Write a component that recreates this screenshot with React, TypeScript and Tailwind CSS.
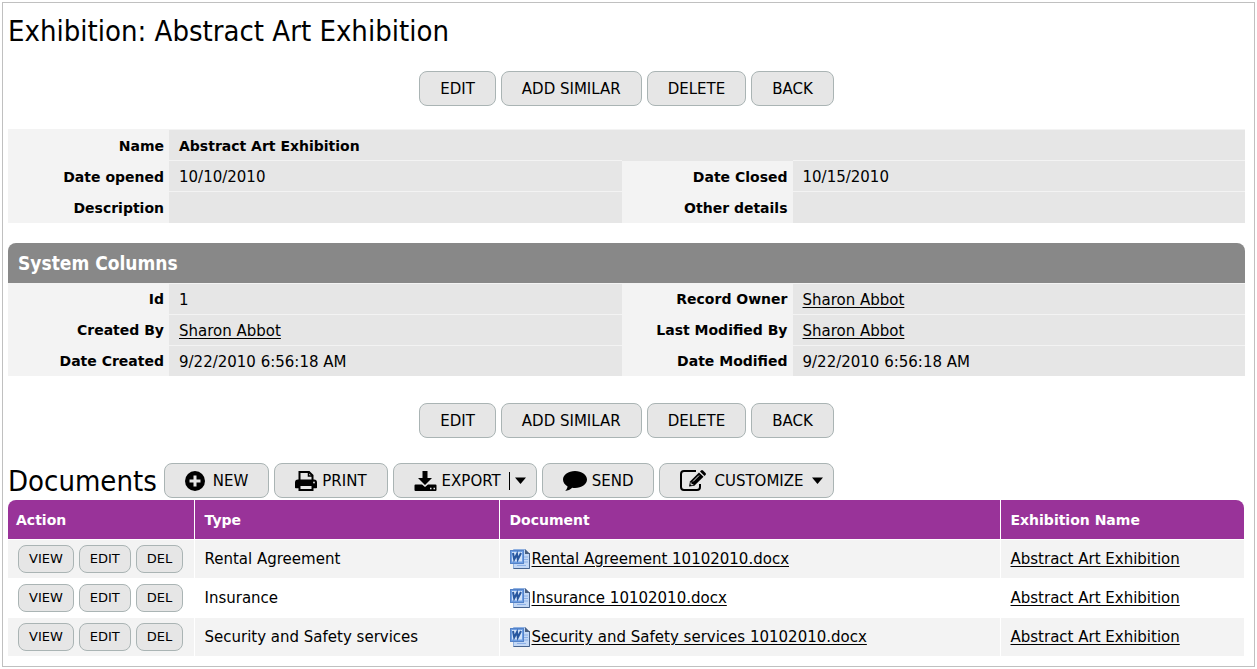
import type React from "react"
import clsx from "clsx"

interface Field {
  label: string
  value?: string
  link?: boolean
  bold?: boolean
}

interface DocumentRow {
  type: string
  file: string
  exhibition: string
}

const detailRows: Field[][] = [
  [{ label: "Name", value: "Abstract Art Exhibition", bold: true }],
  [
    { label: "Date opened", value: "10/10/2010" },
    { label: "Date Closed", value: "10/15/2010" },
  ],
  [{ label: "Description" }, { label: "Other details" }],
]

const systemRows: Field[][] = [
  [
    { label: "Id", value: "1" },
    { label: "Record Owner", value: "Sharon Abbot", link: true },
  ],
  [
    { label: "Created By", value: "Sharon Abbot", link: true },
    { label: "Last Modified By", value: "Sharon Abbot", link: true },
  ],
  [
    { label: "Date Created", value: "9/22/2010 6:56:18 AM" },
    { label: "Date Modified", value: "9/22/2010 6:56:18 AM" },
  ],
]

const documents: DocumentRow[] = [
  { type: "Rental Agreement", file: "Rental Agreement 10102010.docx", exhibition: "Abstract Art Exhibition" },
  { type: "Insurance", file: "Insurance 10102010.docx", exhibition: "Abstract Art Exhibition" },
  {
    type: "Security and Safety services",
    file: "Security and Safety services 10102010.docx",
    exhibition: "Abstract Art Exhibition",
  },
]

const condensed = "font-['DejaVu_Sans_Condensed','DejaVu_Sans',sans-serif]"

const PlusIcon = () => (
  <svg className="h-5 w-5" viewBox="0 0 20 20" aria-hidden="true">
    <circle cx="10" cy="10" r="10" />
    <path d="M10 4.5v11M4.5 10h11" stroke="#e6e6e6" strokeWidth="3" />
  </svg>
)

const PrintIcon = () => (
  <svg className="h-5 w-[22px]" viewBox="0 0 22 20" aria-hidden="true">
    <path d="M4.5 9V1H14l3.500 3.500V9" fill="#e6e6e6" stroke="black" strokeWidth="2" />
    <path d="M13.500 1v4H18" fill="none" stroke="black" strokeWidth="1.500" />
    <path d="M3 8.500h16a3 3 0 0 1 3 3v5a.8.8 0 0 1-.8.8H.8a.8.8 0 0 1-.8-.8v-5a3 3 0 0 1 3-3z" />
    <path d="M4.500 14h13v5h-13z" fill="#e6e6e6" stroke="black" strokeWidth="2" />
    <circle cx="19" cy="11.500" r=".9" fill="#e6e6e6" />
  </svg>
)

const ExportIcon = () => (
  <svg className="h-5 w-[23px]" viewBox="0 0 23 20" aria-hidden="true">
    <path d="M8.500 0h5v7h4.500L11 14 4 7h4.500z" />
    <path d="M1.500 13.500H8l3 2.500 3-2.500h7.500a1 1 0 0 1 1 1V19a1 1 0 0 1-1 1h-20a1 1 0 0 1-1-1v-4.500a1 1 0 0 1 1-1z" />
    <path d="M16 17.500h1.500M19.500 17.500H21" stroke="#e6e6e6" strokeWidth="1.500" />
  </svg>
)

const SendIcon = () => (
  <svg className="h-5 w-6" viewBox="0 0 24 20" aria-hidden="true">
    <path d="M12 0c6.600 0 12 3.800 12 8.500S18.600 17 12 17c-1 0-1.900-.1-2.800-.2C7.300 18.500 5 19.700 2 20c1.300-1.200 2.300-2.800 2.600-4.600C1.800 13.800 0 11.300 0 8.500 0 3.800 5.400 0 12 0z" />
  </svg>
)

const CustomizeIcon = () => (
  <svg className="h-[21px] w-[26px]" viewBox="0 0 26 21" aria-hidden="true">
    <path
      d="M16 1H4a3 3 0 0 0-3 3v13a3 3 0 0 0 3 3h13a3 3 0 0 0 3-3v-3"
      fill="none"
      stroke="black"
      strokeWidth="2"
    />
    <path d="M9 16.500l1-5L19 2.500l4.500 4.200-9.200 9z" />
    <path d="M20 1.500l1-1a1.500 1.500 0 0 1 2 0l2.500 2.500a1.500 1.500 0 0 1 0 2l-1 1z" />
    <path d="M13 11.500l6-6M11 12.500v2.200h2.300" fill="none" stroke="#e6e6e6" strokeWidth="1" />
  </svg>
)

const Caret = () => (
  <svg className="h-[7px] w-[11px]" viewBox="0 0 11 7" aria-hidden="true">
    <path d="M0 .5h11L5.500 7z" />
  </svg>
)

const WordIcon = () => (
  <svg className="h-5 w-5 shrink-0" viewBox="0 0 20 20" aria-hidden="true">
    <path d="M3.500.5H15L19.500 5v14.500h-16z" fill="#c3d8f5" stroke="#8fb0e0" />
    <path d="M19.500 4v15.500H3.500" fill="none" stroke="#47648f" />
    <path d="M15 0v5h5z" fill="#4a5f80" />
    <path d="M14 8h4M14 10.500h4M14 13h4M7 16.500h9" stroke="#8db0e6" />
    <rect x=".5" y="1.500" width="13" height="13" fill="#6f9fe4" stroke="#5583c8" />
    <rect x="2" y="3" width="10" height="9.500" fill="#d3e3f9" />
    <path d="M3 4l1.200 6.500L7 5l.8 5.500L11 4" fill="none" stroke="#28579f" strokeWidth="2" />
  </svg>
)

const Button: React.FC<{ className?: string; children: React.ReactNode }> = ({ className, children }) => (
  <button
    type="button"
    className={clsx(
      "flex h-[35px] items-center rounded-lg border border-[#aab4b4] bg-[#e6e6e6] text-[15px]",
      className ?? "px-5 pt-px",
    )}
  >
    {children}
  </button>
)

const RecordActions = () => (
  <div className="flex flex-wrap justify-center gap-[5px]">
    <Button>EDIT</Button>
    <Button>ADD SIMILAR</Button>
    <Button>DELETE</Button>
    <Button>BACK</Button>
  </div>
)

const FieldTable: React.FC<{ rows: Field[][] }> = ({ rows }) => (
  <table className="w-full table-fixed border-collapse bg-[#f3f3f3]">
    <colgroup>
      <col className="w-[161px]" />
      <col />
      <col className="w-[171px]" />
      <col />
    </colgroup>
    <tbody>
      {rows.map((fields) => (
        <tr key={fields[0].label} className="h-[31px]">
          {fields.map((field) => (
            <FieldCells key={field.label} field={field} span={fields.length === 1 ? 3 : 1} />
          ))}
        </tr>
      ))}
    </tbody>
  </table>
)

const FieldCells: React.FC<{ field: Field; span: number }> = ({ field, span }) => (
  <>
    <th scope="row" className="pr-[5px] pt-px text-right text-[14px] font-bold">
      {field.label}
    </th>
    <td
      colSpan={span}
      className={clsx(
        "border-t border-[#f3f3f3] bg-[#e6e6e6] bg-clip-padding pl-[10px] pt-[2px]",
        field.bold && "text-[14px] font-bold",
      )}
    >
      {field.link ? (
        <a href="#owner" className="underline underline-offset-2">
          {field.value}
        </a>
      ) : (
        field.value
      )}
    </td>
  </>
)

const SmallButton: React.FC<{ children: React.ReactNode }> = ({ children }) => (
  <button type="button" className="h-7 rounded-lg border border-[#aab4b4] bg-[#e6e6e6] px-[10px] text-[13px] leading-none">
    {children}
  </button>
)

export default function App() {
  return (
    <main className="m-[2px] border border-[#c0c0c0] bg-white pb-[10px] pl-[5px] pr-[9px] font-['DejaVu_Sans',sans-serif] text-[15px] leading-5 text-black">
      <h1 className={clsx("pt-[10px] text-[29px] leading-9", condensed)}>Exhibition: Abstract Art Exhibition</h1>

      <div className="mt-[22px]">
        <RecordActions />
      </div>

      <section className="mt-[23px]">
        <FieldTable rows={detailRows} />
      </section>

      <section className="mt-5">
        <h2 className={clsx("rounded-t-lg bg-[#888888] px-[10px] text-[19px] font-bold leading-10 text-white", condensed)}>
          System Columns
        </h2>
        <FieldTable rows={systemRows} />
      </section>

      <div className="mt-[27px]">
        <RecordActions />
      </div>

      <section className="mt-[25px]">
        <div className="flex flex-wrap items-center gap-[5px]">
          <h2 className={clsx("mr-[2px] pt-[2px] text-[29px] leading-[33px]", condensed)}>Documents</h2>
          <Button className="gap-2 px-5">
            <PlusIcon />
            NEW
          </Button>
          <Button className="gap-[5px] px-5">
            <PrintIcon />
            PRINT
          </Button>
          <Button className="gap-[5px] pl-5 pr-[10px]">
            <ExportIcon />
            EXPORT
            <span className="ml-[3px] h-[18px] border-l border-black" />
            <Caret />
          </Button>
          <Button className="gap-[5px] px-5">
            <SendIcon />
            SEND
          </Button>
          <Button className="gap-2 pl-5 pr-[10px]">
            <CustomizeIcon />
            CUSTOMIZE
            <Caret />
          </Button>
        </div>

        <div className="mr-px mt-[2px] overflow-hidden rounded-t-lg">
          <table className="w-full border-collapse">
            <thead>
              <tr className="h-[39px] bg-[#993399] text-left text-[14px] text-white">
                <th className="w-[186px] border-r border-white pl-2 pt-[2px]">Action</th>
                <th className="w-[305px] border-r border-white pl-[10px] pt-[2px]">Type</th>
                <th className="w-[501px] border-r border-white pl-[10px] pt-[2px]">Document</th>
                <th className="pl-[10px] pt-[2px]">Exhibition Name</th>
              </tr>
            </thead>
            <tbody>
              {documents.map((doc) => (
                <tr key={doc.file} className="h-[39px] border-t border-white odd:bg-[#f3f3f3]">
                  <td className="border-r border-white pl-[10px]">
                    <div className="flex gap-[5px]">
                      <SmallButton>VIEW</SmallButton>
                      <SmallButton>EDIT</SmallButton>
                      <SmallButton>DEL</SmallButton>
                    </div>
                  </td>
                  <td className="border-r border-white pl-[10px] pt-px">{doc.type}</td>
                  <td className="border-r border-white pl-[10px] pt-px">
                    <a href="#document" className="flex items-center gap-[2px] underline underline-offset-2">
                      <WordIcon />
                      {doc.file}
                    </a>
                  </td>
                  <td className="pl-[10px] pt-px">
                    <a href="#exhibition" className="underline underline-offset-2">
                      {doc.exhibition}
                    </a>
                  </td>
                </tr>
              ))}
            </tbody>
          </table>
        </div>
      </section>
    </main>
  )
}
